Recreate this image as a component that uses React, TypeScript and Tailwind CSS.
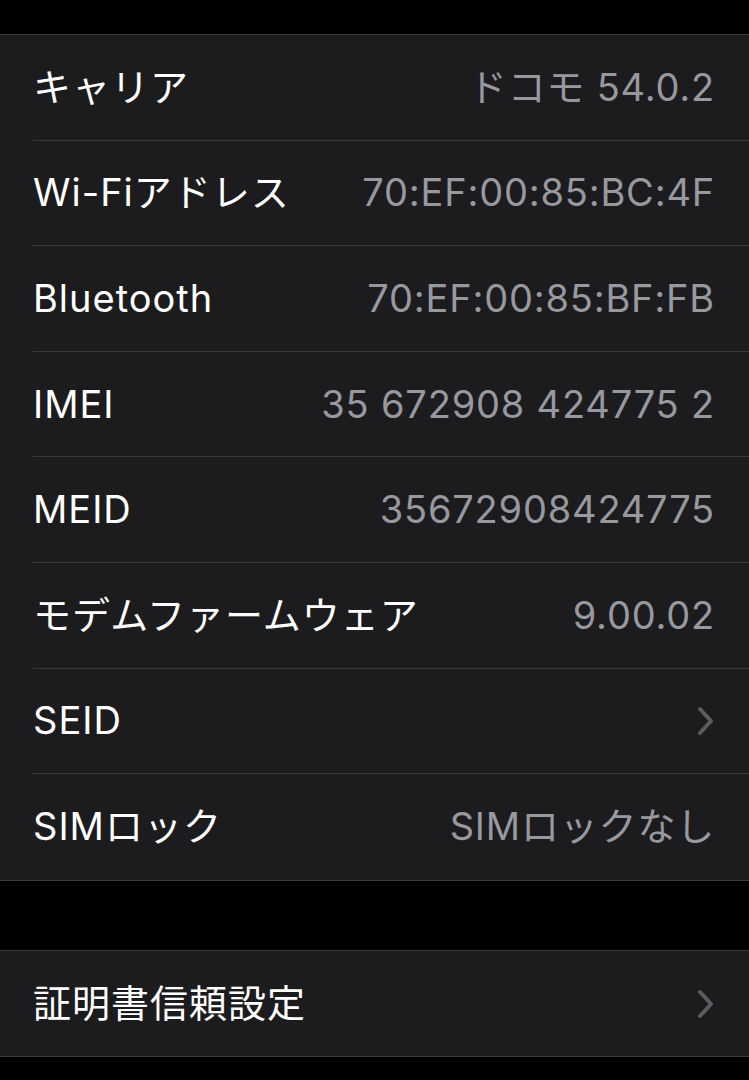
const font = { fontFamily: 'Inter, "Noto Sans CJK JP", sans-serif' }

type Row = { label: string; value?: string; chevron?: boolean }

const about: Row[] = [
  { label: 'キャリア', value: 'ドコモ 54.0.2' },
  { label: 'Wi-Fiアドレス', value: '70:EF:00:85:BC:4F' },
  { label: 'Bluetooth', value: '70:EF:00:85:BF:FB' },
  { label: 'IMEI', value: '35 672908 424775 2' },
  { label: 'MEID', value: '35672908424775' },
  { label: 'モデムファームウェア', value: '9.00.02' },
  { label: 'SEID', chevron: true },
  { label: 'SIMロック', value: 'SIMロックなし' },
]

function Chevron() {
  return (
    <svg width="18" height="30" viewBox="0 0 18 30" fill="none">
      <path d="M3 3l11 12L3 27" stroke="#5b5b60" strokeWidth="4" strokeLinecap="round" strokeLinejoin="round" />
    </svg>
  )
}

function Group({ rows }: { rows: Row[] }) {
  return (
    <div className="bg-[#1c1c1e] border-y border-[#38383a]">
      {rows.map((r, i) => (
        <div key={r.label} className="pl-[33px]">
          <div
            className={`h-[105.6px] flex items-center justify-between pr-[34px] ${i < rows.length - 1 ? 'border-b border-[#38383a]' : ''}`}
          >
            <span className="text-[38px] text-white tracking-[1px]">{r.label}</span>
            {r.value && <span className="text-[38px] text-[#98989f] tracking-[0.8px]">{r.value}</span>}
            {r.chevron && <Chevron />}
          </div>
        </div>
      ))}
    </div>
  )
}

export default function App() {
  return (
    <div className="w-[749px] h-[1080px] bg-black overflow-hidden" style={font}>
      <div className="h-[34px]" />
      <Group rows={about} />
      <div className="h-[69px]" />
      <Group rows={[{ label: '証明書信頼設定', chevron: true }]} />
    </div>
  )
}
